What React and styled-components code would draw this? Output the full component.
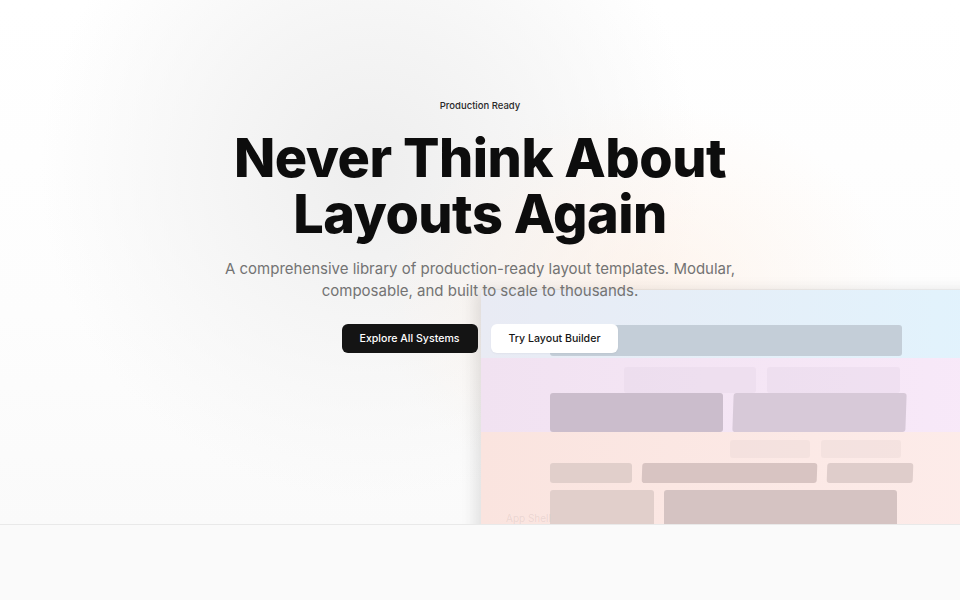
import styled, { createGlobalStyle } from "styled-components";

const GlobalStyle = createGlobalStyle`
  html, body {
    margin: 0;
    padding: 0;
    background: #fafafa;
    font-family: Inter, "Liberation Sans", sans-serif;
    -webkit-font-smoothing: antialiased;
  }
`;

const App = () => {
  return (
    <Page>
      <GlobalStyle />
      <Hero>
        <Content>
          <Badge>Production Ready</Badge>
          <Headline>
            Never Think About
            <br />
            Layouts Again
          </Headline>
          <Lead>
            A comprehensive library of production-ready layout templates. Modular,
            <br />
            composable, and built to scale to thousands.
          </Lead>
          <Actions>
            <Button $primary>Explore All Systems</Button>
            <Button>Try Layout Builder</Button>
          </Actions>
        </Content>

        <Mockup>
          <Layer $from="#e9ebf4" $to="#e1f3fd" $height={68} $pad="35px 0 0 69px">
            <Block $w={352} $h={31} $bg="#c4ced8" />
          </Layer>
          <Layer $from="#f1e2f1" $to="#f8e9f9" $height={74} $pad="9px 0 0 143px">
            <FaintRow>
              <Block $w={132} $h={26} $bg="rgba(230, 214, 232, 0.45)" />
              <Block $w={133} $h={26} $bg="rgba(230, 214, 232, 0.45)" />
            </FaintRow>
            <BoxRow $gap={10} $shift={-74}>
              <Block $w={173} $h={39} $bg="#cbbdcc" />
              <Block $w={173} $h={39} $bg="#d7c9d8" $skew />
            </BoxRow>
          </Layer>
          <Layer $from="#fae4df" $to="#fdecea" $height={140} $pad="8px 0 0 69px">
            <FaintRow $offset={180}>
              <Block $w={80} $h={18} $bg="rgba(236, 218, 214, 0.45)" />
              <Block $w={80} $h={18} $bg="rgba(236, 218, 214, 0.45)" />
            </FaintRow>
            <Rows>
              <BoxRow $gap={10}>
                <Block $w={82} $h={20} $bg="#e1cfcb" />
                <Block $w={175} $h={20} $bg="#d8c4c2" $skew />
                <Block $w={86} $h={20} $bg="#dfcdcb" $skew />
              </BoxRow>
              <BoxRow $gap={10}>
                <Block $w={104} $h={40} $bg="#e1cfcb" />
                <Block $w={233} $h={40} $bg="#d5c3c2" />
              </BoxRow>
            </Rows>
            <GhostLabel>App Shell</GhostLabel>
          </Layer>
        </Mockup>
      </Hero>
      <Lower />
    </Page>
  );
};

export default App;

const Page = styled.div`
  width: 100%;
  min-height: 600px;
  background: #fafafa;
`;

const Hero = styled.section`
  position: relative;
  height: 524px;
  overflow: hidden;
  border-bottom: 1px solid #e9e9e9;
  background:
    radial-gradient(ellipse 260px 200px at 640px 300px, rgba(255, 236, 222, 0.55), rgba(255, 255, 255, 0) 100%),
    radial-gradient(ellipse 330px 330px at 370px 170px, #eeeeee 0%, rgba(244, 244, 244, 0.9) 45%, rgba(255, 255, 255, 0) 100%),
    linear-gradient(180deg, #ffffff 0%, #fdfdfd 60%, #fafafa 100%);
`;

const Content = styled.div`
  position: relative;
  z-index: 2;
  display: flex;
  flex-direction: column;
  align-items: center;
  padding-top: 97px;
`;

const Badge = styled.span`
  font-size: 9.5px;
  font-weight: 500;
  color: #2a2a2a;
  line-height: 18px;
  padding: 0 8px;
`;

const Headline = styled.h1`
  margin: 15px 0 0;
  font-size: 54px;
  font-weight: 800;
  line-height: 56px;
  letter-spacing: -0.5px;
  color: #0d0d0d;
  text-align: center;
`;

const Lead = styled.p`
  margin: 16px 0 0;
  font-size: 15px;
  line-height: 22px;
  color: #737373;
  text-align: center;
`;

const Actions = styled.div`
  display: flex;
  gap: 13px;
  margin-top: 22px;
`;

const Button = styled.button`
  height: 29px;
  padding: 0 18px;
  border-radius: 6px;
  border: none;
  font-family: inherit;
  font-size: 10.6px;
  font-weight: 500;
  cursor: pointer;
  background: ${(p) => (p.$primary ? "#141414" : "#ffffff")};
  color: ${(p) => (p.$primary ? "#ffffff" : "#161616")};
  box-shadow: ${(p) => (p.$primary ? "none" : "0 1px 2px rgba(0,0,0,0.04)")};
`;

const Mockup = styled.div`
  position: absolute;
  left: 481px;
  top: 290px;
  width: 520px;
  height: 300px;
  z-index: 1;
  display: flex;
  flex-direction: column;
  box-shadow: -6px 0 14px rgba(0, 0, 0, 0.1), 0 -1px 0 rgba(0, 0, 0, 0.04);
`;

const Layer = styled.div`
  position: relative;
  flex: none;
  height: ${(p) => p.$height}px;
  padding: ${(p) => p.$pad};
  box-sizing: border-box;
  background: linear-gradient(90deg, ${(p) => p.$from}, ${(p) => p.$to});
  display: flex;
  flex-direction: column;
`;

const Rows = styled.div`
  display: flex;
  flex-direction: column;
  gap: 7px;
  margin-top: 5px;
`;

const FaintRow = styled.div`
  display: flex;
  gap: 11px;
  margin-left: ${(p) => p.$offset || 0}px;
`;

const BoxRow = styled.div`
  display: flex;
  gap: ${(p) => p.$gap}px;
  margin-left: ${(p) => p.$shift || 0}px;
`;

const Block = styled.div`
  flex: none;
  width: ${(p) => p.$w}px;
  height: ${(p) => p.$h}px;
  background: ${(p) => p.$bg};
  border-radius: 3px;
  transform: ${(p) => (p.$skew ? "skewX(-2deg)" : "none")};
`;

const GhostLabel = styled.span`
  position: absolute;
  left: 25px;
  top: 80px;
  font-size: 10px;
  color: rgba(120, 100, 100, 0.12);
`;

const Lower = styled.div`
  height: 75px;
  background: #fafafa;
`;
